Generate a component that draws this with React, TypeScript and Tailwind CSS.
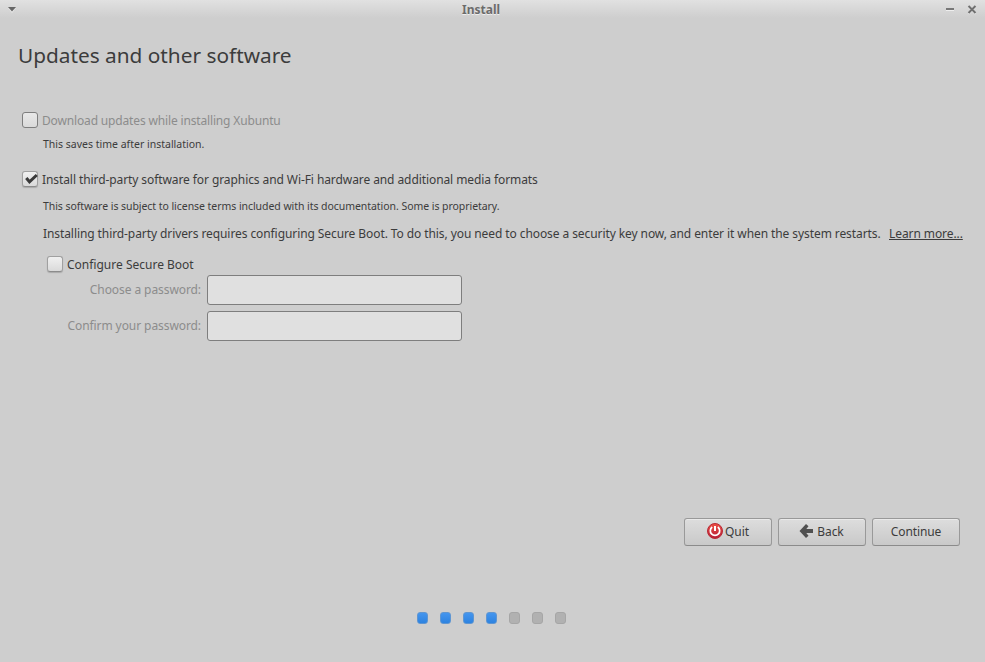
import type { ReactNode } from 'react';

function TitleBar() {
  return (
    <header className="flex h-[18px] items-center bg-linear-to-b from-[#e1e1e1] to-[#cecece] pl-2">
      <svg className="mt-[2px] block h-[6px] w-2 shrink-0" viewBox="0 0 8 6">
        <path d="M0 1h8L4 6z" fill="#e8e8e8" />
        <path d="M0 0h8L4 4.6z" fill="#666" />
      </svg>
      <h1 className="ml-[446px] w-[440px] shrink-0 pt-[2px] text-[12px] leading-[18px] font-bold text-[#6b6b6b] [text-shadow:0_1px_0_#eeeeee]">
        Install
      </h1>
      <svg className="mt-[2px] ml-[44px] block h-[10px] w-8 shrink-0" viewBox="0 0 32 10">
        <path d="M0 5h8v1H0z" fill="#eee" />
        <path d="M0 3h8v2H0z" fill="#777" />
        <path d="M22.500 2l7 7M29.500 2l-7 7" stroke="#eee" strokeWidth="1.5" />
        <path d="M22.500 1l7 7M29.500 1l-7 7" stroke="#707070" strokeWidth="2" />
      </svg>
    </header>
  );
}

function CheckBox({ checked = false, disabled = false }: { checked?: boolean; disabled?: boolean }) {
  return (
    <span
      className={
        disabled
          ? 'block size-4 shrink-0 rounded-[3px] border border-[#7e7e7e] bg-linear-to-b from-[#e8e8e8] to-[#dadada]'
          : 'block size-4 shrink-0 rounded-[3px] border border-[#a0a0a0] border-b-[#8c8c8c] bg-linear-to-b from-[#f0f0f0] to-[#dadada] shadow-[0_1px_1px_#aaaaaa]'
      }
    >
      {checked && (
        <svg className="block size-[14px] overflow-visible" viewBox="0 0 14 14">
          <path d="M3.300 6L6.500 9.800L13.800 3" fill="none" stroke="#3a3a3a" strokeWidth="3" />
        </svg>
      )}
    </span>
  );
}

function Button({ icon, children }: { icon?: ReactNode; children: ReactNode }) {
  return (
    <button className="flex h-7 w-22 items-center justify-center gap-[2px] rounded-[3px] border border-[#999999] border-b-[#8b8b8b] bg-linear-to-b from-[#dddddd] to-[#c9c9c9] text-[12px] leading-4 tracking-[-0.1px] shadow-[inset_0_1px_0_#e9e9e9]">
      {icon}
      {children}
    </button>
  );
}

function PowerIcon() {
  return (
    <svg className="-mt-[2px] block size-4" viewBox="0 0 16 16">
      <defs>
        <linearGradient id="power" x1="0" y1="0" x2="0" y2="1">
          <stop offset="0" stopColor="#ee5044" />
          <stop offset="1" stopColor="#b51d38" />
        </linearGradient>
      </defs>
      <circle cx="8" cy="8" r="7.500" fill="url(#power)" stroke="#b92a35" />
      <path d="M5.200 4a4.700 4.700 0 1 0 5.600 0" fill="none" stroke="#fff" strokeWidth="1.700" />
      <path d="M8 3v5" stroke="#fff" strokeWidth="2" />
    </svg>
  );
}

function BackIcon() {
  return (
    <svg className="-mt-[2px] -ml-px block size-4" viewBox="0 0 16 16">
      <path d="M0.500 8L7 1l2.500 2.200L7.300 6H14v4H7.300l2.200 2.800L7 15z" fill="#505050" />
    </svg>
  );
}

function PasswordRow({ label, name }: { label: string; name: string }) {
  return (
    <div className="flex h-[30px] items-center">
      <label
        htmlFor={name}
        className="w-[201px] pb-[1px] text-right text-[12px] leading-4 tracking-[-0.08px] text-[#8c8c8c]"
      >
        {label}
      </label>
      <input
        id={name}
        type="password"
        disabled
        className="ml-[6px] h-[30px] w-[255px] rounded-[3px] border border-[#7e7e7e] bg-[#e0e0e0]"
      />
    </div>
  );
}

const steps = [true, true, true, true, false, false, false];

export default function App() {
  return (
    <div className="flex h-[662px] w-[985px] flex-col overflow-hidden bg-[#cecece] font-['Noto_Sans','Open_Sans',sans-serif] text-[12px] whitespace-nowrap text-[#3c3c3c]">
      <TitleBar />
      <h2 className="mt-[23px] ml-[18px] text-[20.8px] leading-7">Updates and other software</h2>
      <main className="mt-[43px] flex flex-col">
        <div className="flex h-4 items-center pl-[22px]">
          <CheckBox disabled />
          <span className="ml-1 pt-[2px] leading-4 tracking-[-0.155px] text-[#8c8c8c]">
            Download updates while installing Xubuntu
          </span>
        </div>
        <p className="mt-2 ml-[43px] text-[10.500px] leading-4">This saves time after installation.</p>
        <div className="mt-[19px] flex h-4 items-center pl-[22px]">
          <CheckBox checked />
          <span className="ml-1 pt-[2px] leading-4 tracking-[-0.085px]">
            Install third-party software for graphics and Wi-Fi hardware and additional media formats
          </span>
        </div>
        <p className="mt-[11px] ml-[43px] text-[10.500px] leading-4 tracking-[-0.055px]">
          This software is subject to license terms included with its documentation. Some is proprietary.
        </p>
        <div className="mt-3 ml-[43px] flex leading-4 tracking-[-0.085px]">
          <p className="w-[846px]">
            Installing third-party drivers requires configuring Secure Boot. To do this, you need to choose a security
            key now, and enter it when the system restarts.
          </p>
          <a className="underline underline-offset-1">Learn more...</a>
        </div>
        <div className="mt-[14px] flex h-4 items-center pl-[47px]">
          <CheckBox />
          <span className="ml-1 pt-[2px] leading-4">Configure Secure Boot</span>
        </div>
        <div className="mt-[3px] flex flex-col gap-[6px]">
          <PasswordRow label="Choose a password:" name="choose" />
          <PasswordRow label="Confirm your password:" name="confirm" />
        </div>
      </main>
      <div className="mt-[177px] flex justify-end gap-[6px] pr-[25px]">
        <Button icon={<PowerIcon />}>Quit</Button>
        <Button icon={<BackIcon />}>Back</Button>
        <Button>Continue</Button>
      </div>
      <footer className="mt-[66px] ml-[417px] flex gap-3">
        {steps.map((done, i) => (
          <span
            key={i}
            className={
              done
                ? 'h-3 w-[11px] rounded-[3px] border border-[#5f96d2] bg-linear-to-b from-[#4495ee] to-[#2d83e0]'
                : 'h-3 w-[11px] rounded-[3px] border border-[#a6a6a6] bg-[#b1b1b1]'
            }
          />
        ))}
      </footer>
    </div>
  );
}
